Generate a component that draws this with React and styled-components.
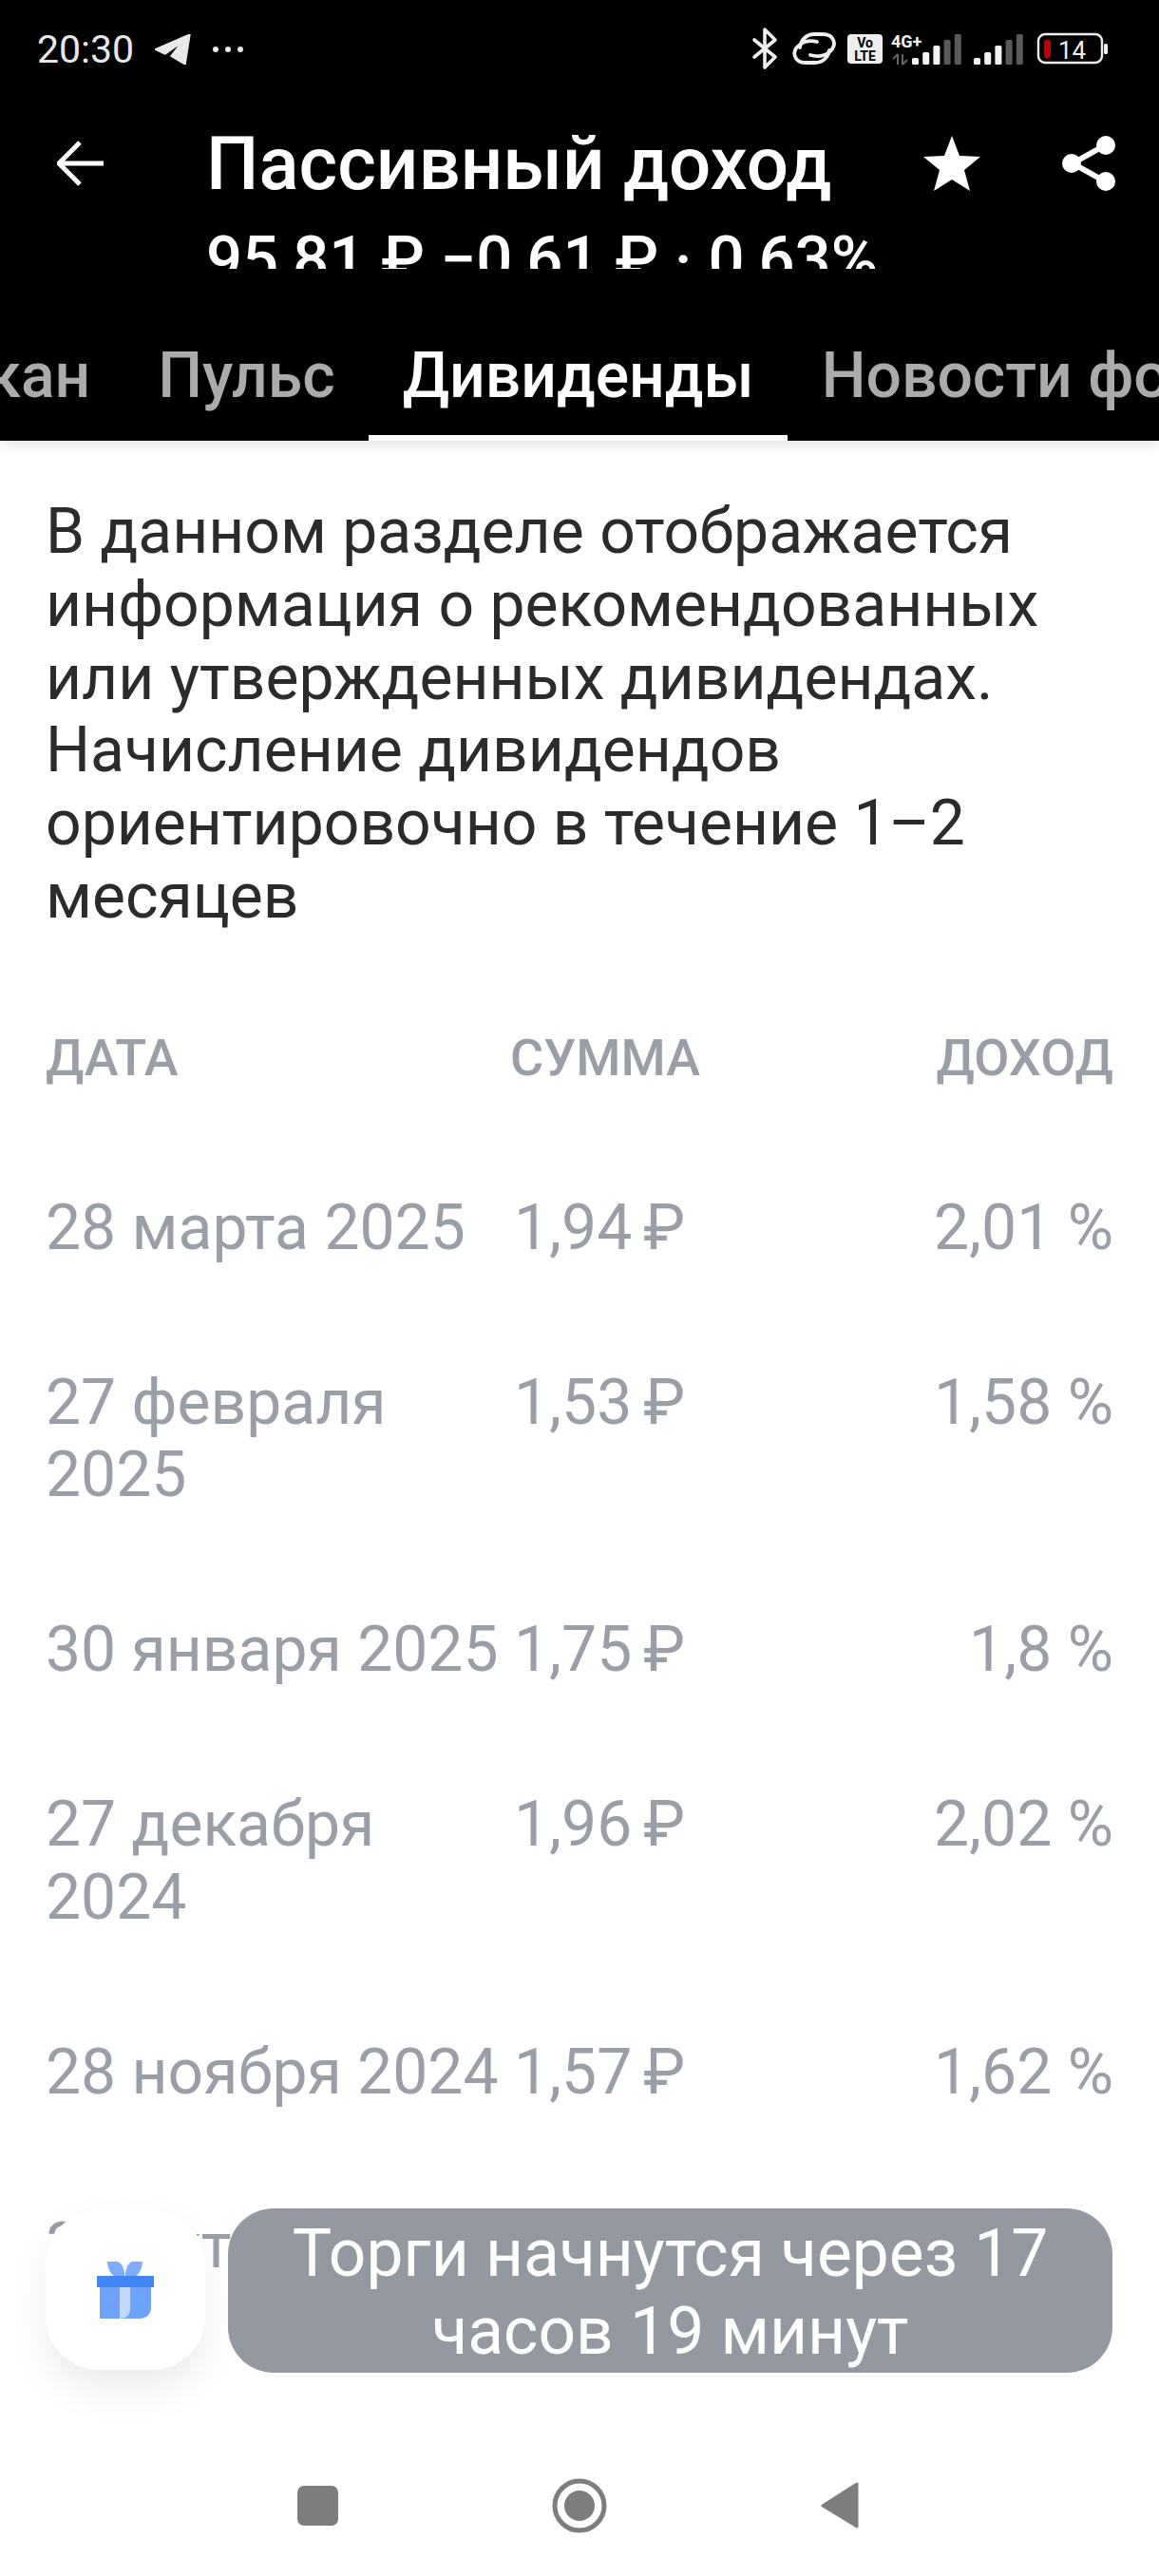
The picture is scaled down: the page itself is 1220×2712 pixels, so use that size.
import React from "react";
import styled, { createGlobalStyle } from "styled-components";

const Global = createGlobalStyle`
  html, body { margin: 0; padding: 0; background: #fff; }
  * { box-sizing: border-box; }
`;

const Screen = styled.div`
  position: relative;
  width: 1220px;
  height: 2712px;
  overflow: hidden;
  background: #fff;
  font-family: Roboto, "Liberation Sans", sans-serif;
`;

const Header = styled.header`
  background: #000;
  color: #fff;
  height: 464px;
  box-shadow: 0 4px 14px rgba(0, 0, 0, 0.12);
  position: relative;
  z-index: 1;
`;

const StatusBar = styled.div`
  height: 104px;
  display: flex;
  align-items: flex-start;
  padding: 30px 50px 0 39px;
`;

const StatusLeft = styled.div`
  display: flex;
  align-items: center;
  gap: 22px;
  height: 44px;
`;

const Time = styled.span`
  font-size: 41px;
  color: #e8e8e8;
  line-height: 44px;
`;

const Toolbar = styled.div`
  display: flex;
  align-items: flex-start;
  height: 244px;
  padding-left: 60px;
`;

const TitleBlock = styled.div`
  width: 740px;
  margin-left: 107px;
  height: 179px;
  overflow: hidden;
  padding-top: 27px;
`;

const Title = styled.div`
  font-size: 78px;
  font-weight: 500;
  line-height: 84px;
  white-space: nowrap;
`;

const Subtitle = styled.div`
  font-size: 67px;
  font-weight: 500;
  line-height: 76px;
  margin-top: 20px;
  white-space: nowrap;
`;

const ToolIcon = styled.svg`
  flex: none;
  margin-top: ${(p) => p.$top}px;
  margin-left: ${(p) => p.$left}px;
`;

const Tabs = styled.nav`
  display: flex;
  height: 116px;
  margin-left: -161px;
  white-space: nowrap;
`;

const Tab = styled.div`
  flex: none;
  position: relative;
  padding: 0 35.5px;
  height: 116px;
  font-size: 66px;
  font-weight: 500;
  line-height: 95px;
  color: ${(p) => (p.$active ? "#fff" : "#ababab")};
  &::after {
    content: "";
    display: ${(p) => (p.$active ? "block" : "none")};
    position: absolute;
    left: 0;
    right: 0;
    bottom: 0;
    height: 6px;
    background: #fff;
  }
`;

const Intro = styled.p`
  margin: 58px 48px 0;
  font-size: 66px;
  line-height: 76.8px;
  color: #2b2b2b;
`;

const Table = styled.div`
  padding: 0 48px;
  margin-top: 99px;
`;

const HeadRow = styled.div`
  display: grid;
  grid-template-columns: 489px 1fr auto;
  font-size: 54px;
  font-weight: 500;
  line-height: 64px;
  color: #9a9fa7;
  padding-bottom: 109px;
`;

const Row = styled.div`
  display: grid;
  grid-template-columns: 489px 1fr auto;
  font-size: 66px;
  line-height: 76.8px;
  color: #9a9fa7;
  padding: 0 0 107px;
`;

const Cell = styled.div`
  text-align: ${(p) => (p.$right ? "right" : "left")};
  white-space: ${(p) => (p.$single ? "nowrap" : "normal")};
`;

const Amount = styled(Cell)`
  padding-left: 4px;
`;

const Ruble = styled.span`
  margin-left: 12px;
`;

const GiftButton = styled.div`
  position: absolute;
  left: 48px;
  top: 2327px;
  width: 168px;
  height: 168px;
  border-radius: 56px;
  background: #fff;
  box-shadow: 0 20px 40px rgba(0, 0, 0, 0.08);
  display: flex;
  align-items: center;
  justify-content: center;
`;

const Toast = styled.div`
  position: absolute;
  left: 240px;
  top: 2325px;
  width: 931px;
  height: 173px;
  border-radius: 48px;
  background: #9499a1;
  color: #fff;
  font-size: 69.5px;
  line-height: 82px;
  text-align: center;
  padding: 7px 40px;
`;

const NavBar = styled.div`
  position: absolute;
  left: 0;
  right: 0;
  bottom: 0;
  height: 170px;
  background: #fff;
`;

const NavIcon = styled.svg`
  position: absolute;
  left: 0;
  top: 0;
`;

const StatusIcons = styled.svg`
  position: absolute;
  left: 790px;
  top: 0;
`;

const Bars = ({ x }) => (
  <g>
    {[61, 55, 48, 42, 36].map((t, i) => (
      <rect
        key={i}
        x={x + i * 11.2}
        y={t}
        width={7}
        height={68 - t}
        rx={1.5}
        fill={i < 3 ? "#f2f2f2" : "#5a5a5a"}
      />
    ))}
  </g>
);

const StatusRight = () => (
  <StatusIcons width="400" height="104" viewBox="790 0 400 104">
    <path d="M794 42 L816 60 L805 71 V31 L816 42 L794 60" fill="none" stroke="#eee" strokeWidth="3.6" strokeLinecap="round" strokeLinejoin="round" />
    <path d="M860 44 C852 42 846 44 842 47 C832 54 836 66 848 66 H858 C866 66 872 60 873 53" fill="none" stroke="#eee" strokeWidth="3.8" strokeLinecap="round" />
    <path d="M853 58 C860 60 868 59 873 55 C882 47 878 36 866 36 H857 C849 36 843 42 842 50" fill="none" stroke="#eee" strokeWidth="3.8" strokeLinecap="round" />
    <rect x="892" y="36" width="37" height="31" rx="4" fill="#eee" />
    <text x="910.5" y="50" textAnchor="middle" fontFamily="Roboto" fontWeight="700" fontSize="14" fill="#000">Vo</text>
    <text x="910.5" y="64" textAnchor="middle" fontFamily="Roboto" fontWeight="700" fontSize="14" fill="#000">LTE</text>
    <text x="938" y="50" fontFamily="Roboto" fontWeight="700" fontSize="18" fill="#f2f2f2">4G+</text>
    <path d="M945 57 V68 M945 57 L940 62 M950 57 V68 M950 68 L955 63" stroke="#666" strokeWidth="2" fill="none" />
    <Bars x={960} />
    <Bars x={1025} />
    <rect x="1093" y="36" width="67" height="30" rx="7" fill="none" stroke="#eee" strokeWidth="2.4" />
    <rect x="1162" y="46" width="4" height="11" rx="1.5" fill="#eee" />
    <rect x="1099" y="42" width="7" height="19" rx="2.5" fill="#c00000" />
    <text x="1114" y="62" fontFamily="Roboto" fontSize="26" fill="#eee">14</text>
  </StatusIcons>
);

const dividends = [
  { date: "28 марта 2025", sum: "1,94", pct: "2,01 %" },
  { date: "27 февраля 2025", sum: "1,53", pct: "1,58 %" },
  { date: "30 января 2025", sum: "1,75", pct: "1,8 %" },
  { date: "27 декабря 2024", sum: "1,96", pct: "2,02 %" },
  { date: "28 ноября 2024", sum: "1,57", pct: "1,62 %" },
  { date: "30 октября 2024", sum: "1,61", pct: "1,66 %", single: true },
];

export default function App() {
  return (
    <Screen>
      <Global />
      <Header>
        <StatusBar>
          <StatusLeft>
            <Time>20:30</Time>
            <svg width="38" height="32" viewBox="0 0 38 32">
              <path d="M0 16 L37 0 L32 32 L17 23 L28 9 L11 21 Z" fill="#e8e8e8" stroke="#e8e8e8" strokeWidth="1.5" strokeLinejoin="round" />
            </svg>
            <svg width="34" height="8" viewBox="0 0 34 8">
              <circle cx="4" cy="4" r="3" fill="#e8e8e8" />
              <circle cx="17" cy="4" r="3" fill="#e8e8e8" />
              <circle cx="30" cy="4" r="3" fill="#e8e8e8" />
            </svg>
          </StatusLeft>
          <StatusRight />
        </StatusBar>
        <Toolbar>
          <ToolIcon $top={44} $left={0} width="50" height="48" viewBox="0 0 50 48">
            <path d="M49 24 H3 M24 2 L2 24 L24 46" fill="none" stroke="#fff" strokeWidth="5" />
          </ToolIcon>
          <TitleBlock>
            <Title>Пассивный доход</Title>
            <Subtitle>95,81 ₽ −0,61 ₽ · 0,63%</Subtitle>
          </TitleBlock>
          <ToolIcon $top={38} $left={14} width="62" height="60" viewBox="0 0 62 60">
            <path d="M31 1 L39 22 L61 23 L44 37 L50 59 L31 47 L12 59 L18 37 L1 23 L23 22 Z" fill="#fff" />
          </ToolIcon>
          <ToolIcon $top={38} $left={84} width="60" height="60" viewBox="0 0 60 60">
            <path d="M48 10 L12 30 L48 50" fill="none" stroke="#fff" strokeWidth="6" />
            <circle cx="47" cy="11" r="10" fill="#fff" />
            <circle cx="11" cy="30" r="10" fill="#fff" />
            <circle cx="47" cy="49" r="10" fill="#fff" />
          </ToolIcon>
        </Toolbar>
        <Tabs>
          <Tab>Стакан</Tab>
          <Tab>Пульс</Tab>
          <Tab $active>Дивиденды</Tab>
          <Tab>Новости фонда</Tab>
        </Tabs>
      </Header>
      <Intro>
        В данном разделе отображается информация о рекомендованных или утвержденных дивидендах. Начисление дивидендов
        ориентировочно в течение 1–2 месяцев
      </Intro>
      <Table>
        <HeadRow>
          <Cell>ДАТА</Cell>
          <Cell>СУММА</Cell>
          <Cell $right>ДОХОД</Cell>
        </HeadRow>
        {dividends.map(({ date, sum, pct, single }) => (
          <Row key={date}>
            <Cell $single={single}>{date}</Cell>
            <Amount>
              {sum}
              <Ruble>₽</Ruble>
            </Amount>
            <Cell $right>{pct}</Cell>
          </Row>
        ))}
      </Table>
      <NavBar>
        <NavIcon width="1220" height="170" viewBox="0 2542 1220 170">
          <rect x="313" y="2617" width="43" height="42" rx="7" fill="#7d7d7d" />
          <circle cx="610" cy="2638" r="26" fill="none" stroke="#7d7d7d" strokeWidth="5" />
          <circle cx="610" cy="2638" r="16" fill="#7d7d7d" />
          <path d="M902 2615 V2660 L866 2638 Z" fill="#7d7d7d" stroke="#7d7d7d" strokeWidth="3" strokeLinejoin="round" />
        </NavIcon>
      </NavBar>
      <GiftButton>
        <svg width="60" height="60" viewBox="0 0 60 60">
          <path d="M11 0 H22 C27 2 29 8 29 15 H18 C14 13 11 6 11 0 Z" fill="#7fadfb" />
          <path d="M48 0 H37 C32 2 30 8 30 15 H41 C45 13 48 6 48 0 Z" fill="#7fadfb" />
          <path d="M3 27 H57 V48 C57 56 52 60 44 60 H3 Z" fill="#6ea3fb" />
          <path d="M24 27 H35 V50 C35 56 31 60 24 60 Z" fill="#c3d8fa" />
          <rect x="0" y="15" width="60" height="12" fill="#4285f4" />
        </svg>
      </GiftButton>
      <Toast>Торги начнутся через 17 часов 19 минут</Toast>
    </Screen>
  );
}
